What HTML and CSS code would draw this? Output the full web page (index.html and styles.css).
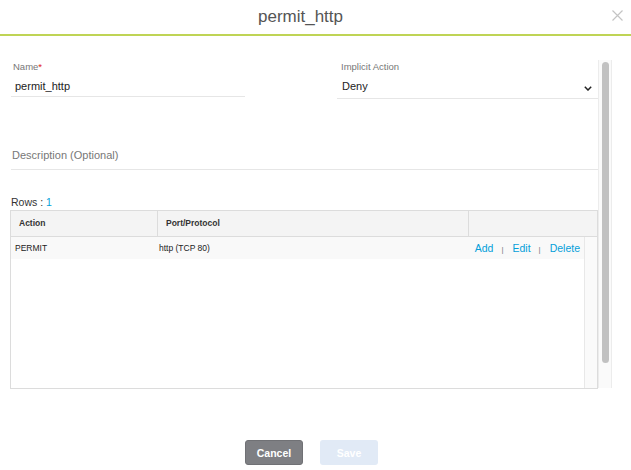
FILE: index.html
```html
<!DOCTYPE html>
<html lang="en">
<head>
  <meta charset="UTF-8" />
  <meta name="viewport" content="width=device-width, initial-scale=1.0"/>
  <title>permit_http</title>
  <link rel="stylesheet" href="styles.css">
</head>
<body>

<div class="modal">
  <header class="modal-header">
    <span></span>
    <h1 class="modal-title">permit_http</h1>
    <button class="close-btn" title="Close">
      <svg width="11" height="11" viewBox="0 0 11 11"><path d="M0.5 0.5 L10.5 10.5 M10.5 0.5 L0.5 10.5" stroke="#c4c4c4" stroke-width="1.2" fill="none"/></svg>
    </button>
  </header>

  <div class="modal-body">
    <div class="content">
      <div class="form-row">
        <div class="field field-name">
          <label class="field-label">Name<span class="req">*</span></label>
          <div class="field-value">permit_http</div>
        </div>
        <div class="field field-action">
          <label class="field-label">Implicit Action</label>
          <div class="field-value select">
            <span>Deny</span>
            <svg width="8" height="5" viewBox="0 0 8 5"><path d="M0.8 0.8 L4 4 L7.2 0.8" stroke="#222" stroke-width="1.5" fill="none"/></svg>
          </div>
        </div>
      </div>

      <div class="field-desc">Description (Optional)</div>

      <div class="rows-count">Rows : <span class="rows-num">1</span></div>

      <div class="grid">
        <div class="grid-head">
          <div class="head-cell">Action</div>
          <div class="head-cell">Port/Protocol</div>
          <div class="head-cell"></div>
        </div>
        <div class="grid-body">
          <div class="grid-rows">
            <div class="grid-row">
              <span>PERMIT</span>
              <span>http (TCP 80)</span>
              <span class="row-actions">
                <a href="#">Add</a><span class="sep">|</span><a href="#">Edit</a><span class="sep">|</span><a href="#">Delete</a>
              </span>
            </div>
          </div>
          <div class="grid-gutter"></div>
        </div>
      </div>
    </div>

    <div class="scroll-track"><div class="scroll-thumb"></div></div>
  </div>

  <footer class="modal-footer">
    <button class="btn btn-cancel">Cancel</button>
    <button class="btn btn-save" disabled>Save</button>
  </footer>
</div>

</body>
</html>
```

FILE: styles.css
```css
body {
  margin: 0;
  background: #fff;
  font-family: "Liberation Sans", Arial, sans-serif;
  color: #222;
}

/* Header */
.modal-header {
  height: 34px;
  border-bottom: 2px solid #bfd455;
  display: grid;
  grid-template-columns: 1fr auto 1fr;
}

.modal-title {
  margin: 0 30px 0 0;
  font-size: 17px;
  font-weight: normal;
  line-height: 34px;
  color: #555;
}

.close-btn {
  justify-self: end;
  align-self: start;
  margin: 10px 8px 0 0;
  padding: 0;
  border: none;
  background: transparent;
  line-height: 0;
  cursor: pointer;
}

/* Body */
.modal-body {
  display: flex;
  padding: 24px 19px 0 10px;
}

.content {
  flex: 1;
  padding-top: 1px;
}

.form-row {
  display: grid;
  grid-template-columns: 326px 1fr;
  padding-left: 1px;
}

.field-label {
  display: block;
  font-size: 9.5px;
  line-height: 12px;
  color: #777;
  padding-left: 2px;
}

.req {
  color: #e2231a;
}

.field-value {
  margin-top: 5px;
  font-size: 11px;
  line-height: 16px;
  color: #222;
  padding: 0 0 2px 4px;
  border-bottom: 1px solid #e6e6e6;
}

.field-name {
  width: 234px;
}

.field-action .field-label {
  padding-left: 4px;
}

.select {
  display: flex;
  justify-content: space-between;
  align-items: center;
  padding: 0 6px 4px 5px;
}

.select svg {
  margin-top: 5px;
}

.field-desc {
  margin: 48px 0 0 1px;
  font-size: 11px;
  line-height: 16px;
  color: #777;
  padding: 0 0 6px 1px;
  border-bottom: 1px solid #e6e6e6;
}

.rows-count {
  margin-top: 25px;
  font-size: 10.5px;
  line-height: 14px;
  color: #333;
  padding-left: 1px;
}

.rows-num {
  color: #049fd9;
}

/* Table */
.grid {
  margin-top: 1px;
  border: 1px solid #dcdcdc;
}

.grid-head {
  height: 25px;
  background: #f4f4f4;
  border-bottom: 1px solid #dcdcdc;
  display: grid;
  grid-template-columns: 147px 311px 1fr;
}

.head-cell {
  border-right: 1px solid #dcdcdc;
  padding-left: 8px;
  font-size: 8.5px;
  font-weight: bold;
  line-height: 25px;
  color: #333;
}

.head-cell:last-child {
  border-right: none;
}

.grid-body {
  height: 151px;
  display: flex;
}

.grid-rows {
  flex: 1;
}

.grid-row {
  height: 22px;
  background: #f9f9f9;
  display: grid;
  grid-template-columns: 144px 1fr auto;
  align-items: center;
  padding: 0 4px 0 4px;
  font-size: 8.5px;
  color: #222;
}

.row-actions {
  font-size: 10.5px;
}

.row-actions a {
  color: #049fd9;
  text-decoration: none;
}

.sep {
  font-size: 8px;
  color: #777;
  margin: 0 9px 0 8px;
}

.grid-gutter {
  width: 12px;
  border-left: 1px solid #e8e8e8;
  background: #fafafa;
}

/* Outer scrollbar */
.scroll-track {
  width: 14px;
  height: 328px;
  border-left: 1px solid #ececec;
  border-right: 1px solid #ececec;
  background: #fafafa;
  display: flex;
  justify-content: center;
  padding-top: 2px;
  box-sizing: border-box;
}

.scroll-thumb {
  width: 7px;
  height: 301px;
  border-radius: 4px;
  background: #c1c1c1;
}

/* Footer */
.modal-footer {
  display: flex;
  justify-content: center;
  gap: 17px;
  padding: 51px 8px 0 0;
}

.btn {
  width: 58px;
  height: 25px;
  border-radius: 3px;
  font-family: "Liberation Sans", Arial, sans-serif;
  font-size: 10.5px;
  font-weight: bold;
  color: #fff;
  cursor: pointer;
}

.btn-cancel {
  background: #7e7f83;
  border: 1px solid #707175;
}

.btn-save {
  background: #e1eaf6;
  border: none;
  cursor: default;
}
```
